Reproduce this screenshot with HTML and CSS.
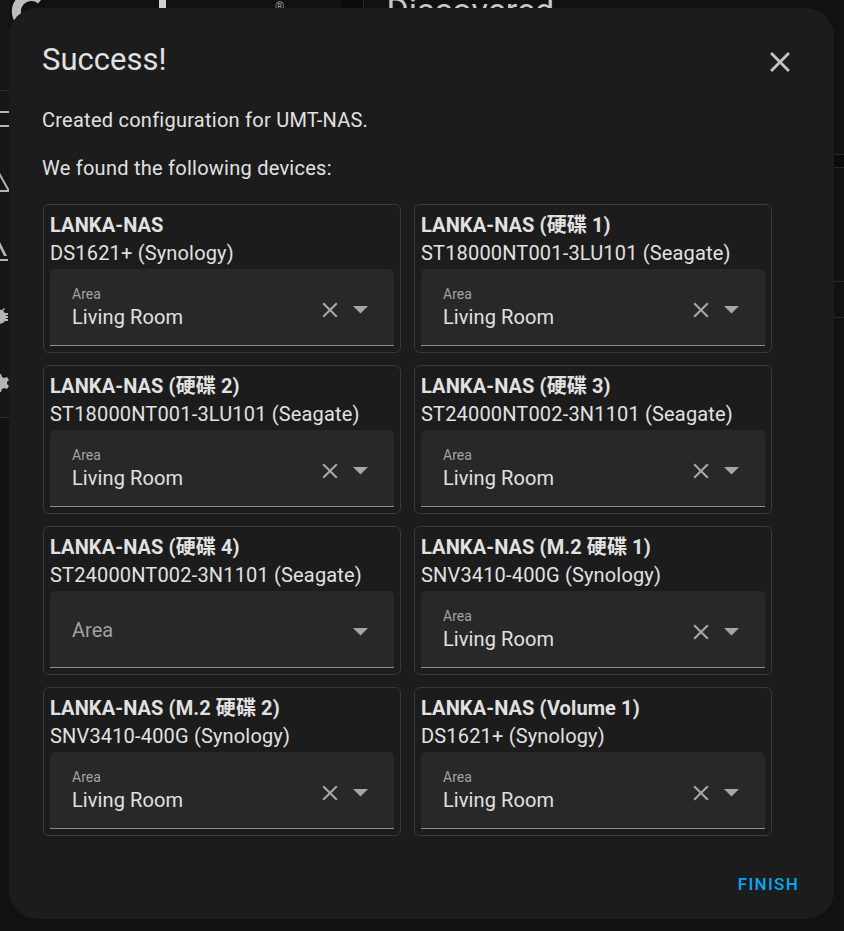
FILE: index.html
```html
<!DOCTYPE html>
<html lang="en">
<head>
<meta charset="utf-8">
<title>Success</title>
<link rel="stylesheet" href="styles.css">
</head>
<body>
<div class="page">
  <aside class="rail">
    <div class="rail-top"></div>
    <div class="rail-icons">
      <svg class="rail-icon" viewBox="0 0 24 24"><path d="M3 4h18v2H5v12h16v2H3z" fill="currentColor"/></svg>
      <svg class="rail-icon" viewBox="0 0 24 24"><path d="M12 2l9 16H3z" fill="none" stroke="currentColor" stroke-width="2"/></svg>
      <svg class="rail-icon" viewBox="0 0 24 24"><path d="M12 3l7 14h-3l-4-8-4 8H5zM4 20h16v2H4z" fill="currentColor"/></svg>
      <svg class="rail-icon" viewBox="0 0 24 24"><path d="M20 8h-3a6 6 0 0 0-2-2l2-2-1-1-2 2a6 6 0 0 0-4 0L8 3 7 4l2 2a6 6 0 0 0-2 2H4v2h2v1H4v2h2v1H4v2h3a6 6 0 0 0 10 0h3v-2h-2v-1h2v-2h-2v-1h2z" fill="currentColor"/></svg>
      <svg class="rail-icon" viewBox="0 0 24 24"><path d="M19 13a7 7 0 0 0 0-2l2-2-2-3-3 1a7 7 0 0 0-2-1l-1-3h-2l-1 3a7 7 0 0 0-2 1L5 6 3 9l2 2a7 7 0 0 0 0 2l-2 2 2 3 3-1a7 7 0 0 0 2 1l1 3h2l1-3a7 7 0 0 0 2-1l3 1 2-3z" fill="currentColor"/></svg>
    </div>
    <div class="rail-bottom"></div>
  </aside>
  <div class="main">
    <div class="topbar">
      <svg class="logo" viewBox="0 0 40 40"><path d="M32 8A15 15 0 1 0 33 30" fill="none" stroke="#bdbdbd" stroke-width="9"/></svg>
      <span class="bar-mark"></span>
      <span class="reg">®</span>
      <span class="dark-block"></span>
      <span class="discovered">Discovered</span>
    </div>
    <div class="content">
      <div class="band-gap"></div>
      <div class="band"></div>
      <div class="band-gap2"></div>
      <div class="band2"></div>
    </div>
  </div>
</div>

<div class="dialog" role="dialog">
  <div class="dialog-header">
    <h2 class="dialog-title">Success!</h2>
    <svg class="close" viewBox="0 0 24 24"><path d="M19 6.41L17.590 5 12 10.59 6.41 5 5 6.41 10.59 12 5 17.59 6.41 19 12 13.41 17.59 19 19 17.59 13.41 12z" fill="currentColor"/></svg>
  </div>
  <p class="msg">Created configuration for UMT-NAS.</p>
  <p class="msg msg2">We found the following devices:</p>

  <div class="grid">
    <div class="card">
      <div class="card-title">LANKA-NAS</div>
      <div class="card-sub">DS1621+ (Synology)</div>
      <div class="field">
        <div class="field-text"><div class="label">Area</div><div class="value">Living Room</div></div>
        <svg class="clear" viewBox="0 0 24 24"><path d="M19 6.41L17.59 5 12 10.59 6.41 5 5 6.41 10.59 12 5 17.59 6.41 19 12 13.41 17.59 19 19 17.59 13.41 12z" fill="currentColor"/></svg>
        <svg class="arrow" viewBox="0 0 15 8"><path d="M0 0h15L7.5 7.5z" fill="currentColor"/></svg>
      </div>
    </div>
    <div class="card">
      <div class="card-title">LANKA-NAS (硬碟 1)</div>
      <div class="card-sub">ST18000NT001-3LU101 (Seagate)</div>
      <div class="field">
        <div class="field-text"><div class="label">Area</div><div class="value">Living Room</div></div>
        <svg class="clear" viewBox="0 0 24 24"><path d="M19 6.41L17.59 5 12 10.59 6.41 5 5 6.41 10.59 12 5 17.59 6.41 19 12 13.41 17.59 19 19 17.59 13.41 12z" fill="currentColor"/></svg>
        <svg class="arrow" viewBox="0 0 15 8"><path d="M0 0h15L7.5 7.5z" fill="currentColor"/></svg>
      </div>
    </div>
    <div class="card">
      <div class="card-title">LANKA-NAS (硬碟 2)</div>
      <div class="card-sub">ST18000NT001-3LU101 (Seagate)</div>
      <div class="field">
        <div class="field-text"><div class="label">Area</div><div class="value">Living Room</div></div>
        <svg class="clear" viewBox="0 0 24 24"><path d="M19 6.41L17.59 5 12 10.59 6.41 5 5 6.41 10.59 12 5 17.59 6.41 19 12 13.41 17.59 19 19 17.59 13.41 12z" fill="currentColor"/></svg>
        <svg class="arrow" viewBox="0 0 15 8"><path d="M0 0h15L7.5 7.5z" fill="currentColor"/></svg>
      </div>
    </div>
    <div class="card">
      <div class="card-title">LANKA-NAS (硬碟 3)</div>
      <div class="card-sub">ST24000NT002-3N1101 (Seagate)</div>
      <div class="field">
        <div class="field-text"><div class="label">Area</div><div class="value">Living Room</div></div>
        <svg class="clear" viewBox="0 0 24 24"><path d="M19 6.41L17.59 5 12 10.59 6.41 5 5 6.41 10.59 12 5 17.59 6.41 19 12 13.41 17.59 19 19 17.59 13.41 12z" fill="currentColor"/></svg>
        <svg class="arrow" viewBox="0 0 15 8"><path d="M0 0h15L7.5 7.5z" fill="currentColor"/></svg>
      </div>
    </div>
    <div class="card">
      <div class="card-title">LANKA-NAS (硬碟 4)</div>
      <div class="card-sub">ST24000NT002-3N1101 (Seagate)</div>
      <div class="field">
        <div class="field-text empty"><div class="placeholder">Area</div></div>
        <svg class="arrow" viewBox="0 0 15 8"><path d="M0 0h15L7.5 7.5z" fill="currentColor"/></svg>
      </div>
    </div>
    <div class="card">
      <div class="card-title">LANKA-NAS (M.2 硬碟 1)</div>
      <div class="card-sub">SNV3410-400G (Synology)</div>
      <div class="field">
        <div class="field-text"><div class="label">Area</div><div class="value">Living Room</div></div>
        <svg class="clear" viewBox="0 0 24 24"><path d="M19 6.41L17.59 5 12 10.59 6.41 5 5 6.41 10.59 12 5 17.59 6.41 19 12 13.41 17.59 19 19 17.59 13.41 12z" fill="currentColor"/></svg>
        <svg class="arrow" viewBox="0 0 15 8"><path d="M0 0h15L7.5 7.5z" fill="currentColor"/></svg>
      </div>
    </div>
    <div class="card">
      <div class="card-title">LANKA-NAS (M.2 硬碟 2)</div>
      <div class="card-sub">SNV3410-400G (Synology)</div>
      <div class="field">
        <div class="field-text"><div class="label">Area</div><div class="value">Living Room</div></div>
        <svg class="clear" viewBox="0 0 24 24"><path d="M19 6.41L17.59 5 12 10.59 6.41 5 5 6.41 10.59 12 5 17.59 6.41 19 12 13.41 17.59 19 19 17.59 13.41 12z" fill="currentColor"/></svg>
        <svg class="arrow" viewBox="0 0 15 8"><path d="M0 0h15L7.5 7.5z" fill="currentColor"/></svg>
      </div>
    </div>
    <div class="card">
      <div class="card-title">LANKA-NAS (Volume 1)</div>
      <div class="card-sub">DS1621+ (Synology)</div>
      <div class="field">
        <div class="field-text"><div class="label">Area</div><div class="value">Living Room</div></div>
        <svg class="clear" viewBox="0 0 24 24"><path d="M19 6.41L17.59 5 12 10.59 6.41 5 5 6.41 10.59 12 5 17.59 6.41 19 12 13.41 17.59 19 19 17.59 13.41 12z" fill="currentColor"/></svg>
        <svg class="arrow" viewBox="0 0 15 8"><path d="M0 0h15L7.5 7.5z" fill="currentColor"/></svg>
      </div>
    </div>
  </div>

  <div class="dialog-footer">
    <button class="finish" type="button">FINISH</button>
  </div>
</div>
</body>
</html>
```

FILE: styles.css
```css
* { box-sizing: border-box; }

body {
  margin: 0;
  width: 844px;
  height: 931px;
  overflow: hidden;
  position: relative;
  background: #111111;
  font-family: Roboto, "Noto Sans CJK TC", sans-serif;
  color: #e1e1e1;
}

/* ---------- background page (mostly hidden behind the dialog) ---------- */
.page {
  display: flex;
  height: 931px;
}

.rail {
  width: 9px;
  flex: none;
  background: #161616;
  overflow: hidden;
  display: flex;
  flex-direction: column;
  color: #b4b4b4;
}

.rail-top {
  height: 91px;
  border-bottom: 1px solid #2c2c2c;
}

.rail-icons {
  display: flex;
  flex-direction: column;
  gap: 42px;
  padding-top: 16px;
  height: 326px;
}

.rail-icon {
  width: 24px;
  height: 24px;
  margin-left: -12px;
  flex: none;
}

.rail-bottom {
  flex: 1;
  border-top: 1px solid #2c2c2c;
  background: #121212;
}

.main {
  flex: 1;
  display: flex;
  flex-direction: column;
}

.topbar {
  height: 60px;
  display: flex;
  align-items: flex-start;
}

.logo {
  width: 40px;
  height: 40px;
  margin: -8px 0 0 0;
}

.bar-mark {
  width: 7px;
  height: 30px;
  background: #cfcfcf;
  margin-left: 110px;
}

.reg {
  font-size: 12px;
  color: #9a9a9a;
  margin-left: 109px;
  line-height: 14px;
}

.dark-block {
  width: 23px;
  height: 60px;
  background: #0b0b0b;
  border-right: 1px solid #262626;
  margin-left: 57px;
}

.discovered {
  font-size: 34px;
  line-height: 40px;
  color: #c8c8c8;
  margin-left: 22px;
  margin-top: -10px;
}

.content {
  margin-left: auto;
  width: 470px;
  display: flex;
  flex-direction: column;
}

.band-gap { height: 94px; }
.band {
  height: 14px;
  background: #0b0b0b;
  border-top: 1px solid #2a2a2a;
  border-bottom: 1px solid #2a2a2a;
}
.band-gap2 { height: 113px; }
.band2 {
  height: 37px;
  border-top: 1px solid #2a2a2a;
  border-bottom: 1px solid #2a2a2a;
}

/* ---------- dialog ---------- */
.dialog {
  position: absolute;
  left: 9px;
  top: 8px;
  width: 825px;
  height: 911px;
  background: #1c1c1c;
  border-radius: 28px;
  padding: 31px 32px 23px 33px;
}

.dialog-header {
  display: flex;
  justify-content: space-between;
  height: 40px;
}

.dialog-title {
  margin: 1px 0 0 0;
  font-size: 31px;
  font-weight: 400;
  line-height: 40px;
  color: #e1e1e1;
}

.close {
  width: 34px;
  height: 34px;
  margin-top: 6px;
  margin-right: 5px;
  color: #c4c4c4;
}

.msg {
  margin: 27px 0 0 0;
  font-size: 20px;
  line-height: 28px;
  letter-spacing: 0.25px;
  color: #e1e1e1;
}

.msg2 { margin-top: 20px; }

.grid {
  display: grid;
  grid-template-columns: 358px 358px;
  column-gap: 13px;
  row-gap: 12px;
  margin: 22px 0 0 1px;
}

.card {
  border: 1px solid #3a3a3a;
  border-radius: 6px;
  padding: 6px;
  height: 149px;
}

.card-title {
  font-size: 20px;
  font-weight: 700;
  line-height: 28px;
  letter-spacing: 0.1px;
  color: #e1e1e1;
  white-space: nowrap;
}

.card-sub {
  font-size: 20px;
  line-height: 28px;
  letter-spacing: 0.17px;
  color: #e1e1e1;
  white-space: nowrap;
}

.field {
  margin-top: 2px;
  height: 77px;
  background: #282828;
  border-bottom: 1px solid #8c8c8c;
  border-radius: 5px 5px 0 0;
  display: flex;
  align-items: center;
  padding-left: 22px;
}

.field-text {
  flex: 1;
  align-self: flex-start;
  padding-top: 17px;
}

.field-text.empty {
  align-self: center;
  padding-top: 0;
}

.label {
  font-size: 14px;
  line-height: 17px;
  color: #a3a3a3;
}

.value {
  font-size: 20px;
  line-height: 28px;
  letter-spacing: 0.1px;
  color: #e1e1e1;
}

.placeholder {
  font-size: 20px;
  line-height: 28px;
  color: #a0a0a0;
  padding-top: 1px;
}

.clear {
  width: 26px;
  height: 26px;
  margin-right: 10px;
  margin-top: 5px;
  color: #a6a6a6;
}

.arrow {
  width: 15px;
  height: 8px;
  margin-right: 26px;
  margin-top: 5px;
  color: #a6a6a6;
}

.dialog-footer {
  display: flex;
  justify-content: flex-end;
  margin-top: 36px;
}

.finish {
  background: none;
  border: 0;
  padding: 0;
  margin-right: 3px;
  font-family: Roboto, sans-serif;
  font-size: 17px;
  font-weight: 500;
  line-height: 24px;
  letter-spacing: 1.3px;
  color: #03a9f4;
}
```
